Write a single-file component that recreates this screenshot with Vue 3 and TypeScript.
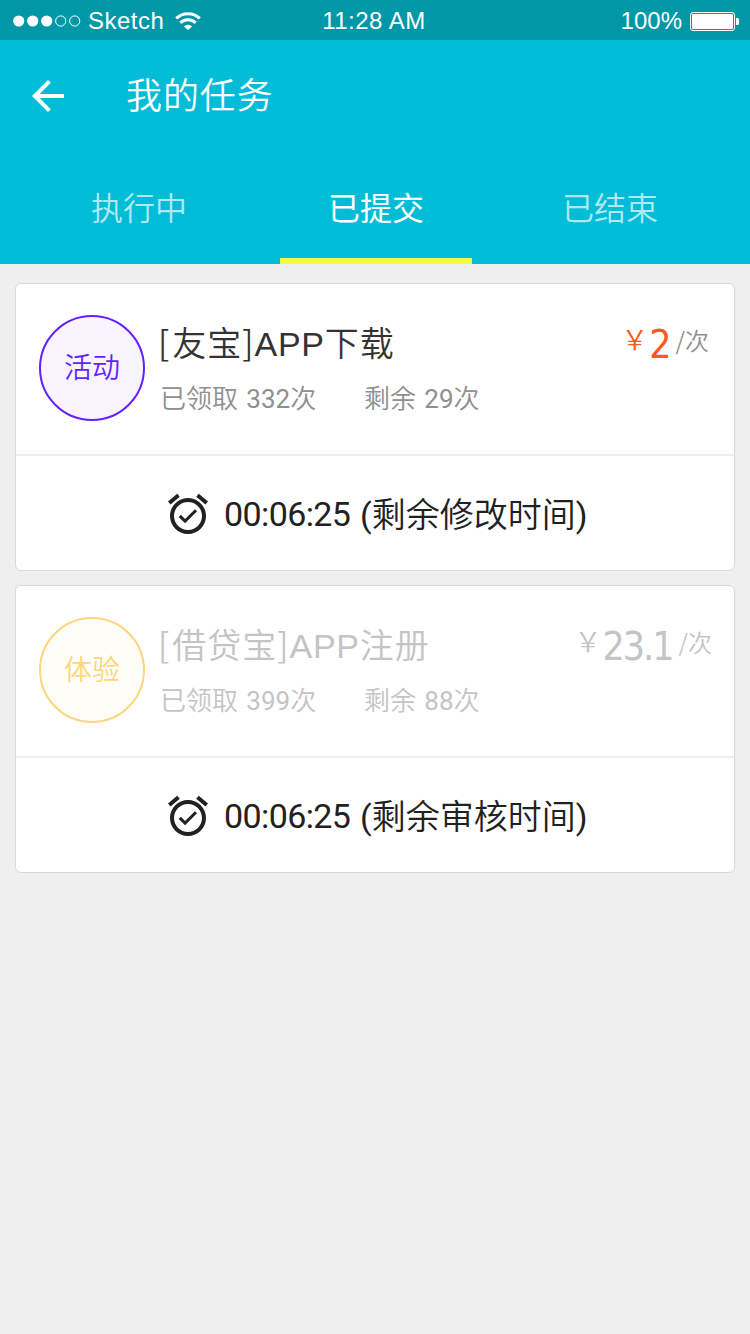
<script setup lang="ts">
import { ref } from 'vue'

interface Task {
  id: number
  tag: string
  tone: 'activity' | 'trial'
  muted: boolean
  bracket: string
  name: string
  suffix: string
  taken: number
  left: number
  price: string
  countdown: string
  note: string
}

const tabs: string[] = ['执行中', '已提交', '已结束']
const current = ref<number>(1)

const tasks: Task[] = [
  {
    id: 1, tag: '活动', tone: 'activity', muted: false, bracket: '友宝', name: 'APP', suffix: '下载',
    taken: 332, left: 29, price: '2', countdown: '00:06:25', note: '剩余修改时间',
  },
  {
    id: 2, tag: '体验', tone: 'trial', muted: true, bracket: '借贷宝', name: 'APP', suffix: '注册',
    taken: 399, left: 88, price: '23.1', countdown: '00:06:25', note: '剩余审核时间',
  },
]
</script>

<template>
  <div class="screen">
    <div class="status">
      <div class="status-left">
        <svg class="signal" width="70" height="12" viewBox="0 0 70 12">
          <circle v-for="n in 3" :key="n" :cx="n * 14 - 8.3" cy="6" r="5.6" fill="#fff" />
          <circle v-for="n in 2" :key="'o' + n" :cx="n * 14 + 33.7" cy="6" r="5.1" fill="none" stroke="#fff" stroke-width="1" />
        </svg>
        <span class="carrier">Sketch</span>
        <svg class="wifi" width="26" height="18" viewBox="0 0 26 18">
          <g fill="none" stroke="#fff" stroke-width="3">
            <path d="M1.2 6.4a17 17 0 0 1 23.6 0" />
            <path d="M5.3 10.9a11.2 11.2 0 0 1 15.4 0" />
          </g>
          <path d="M8.9 14.4a6 6 0 0 1 8.2 0L13 18z" fill="#fff" />
        </svg>
      </div>
      <span class="clock">11:28 AM</span>
      <div class="status-right">
        <span class="percent">100%</span>
        <svg class="battery" width="50" height="20" viewBox="0 0 50 20">
          <rect x=".5" y=".5" width="44" height="18" rx="2.5" fill="none" stroke="#fff" />
          <rect x="2" y="2" width="41" height="15" rx="1" fill="#fff" />
          <path d="M46 6h1.5q1.5 0 1.5 1.5v4q0 1.5-1.5 1.5H46z" fill="#fff" />
        </svg>
      </div>
    </div>

    <header class="header">
      <div class="bar">
        <svg class="back" width="48" height="48" viewBox="0 0 24 24">
          <path fill="#fff" d="M20 11H7.83l5.59-5.59L12 4l-8 8 8 8 1.41-1.41L7.83 13H20v-2z" />
        </svg>
        <h1 class="title">我的任务</h1>
      </div>
      <nav class="tabs">
        <button v-for="(tab, i) in tabs" :key="tab" class="tab" :class="{ active: i === current }" @click="current = i">
          {{ tab }}
        </button>
      </nav>
    </header>

    <main class="list">
      <article v-for="task in tasks" :key="task.id" class="card">
        <div class="info" :class="{ muted: task.muted }">
          <div class="tag" :class="task.tone">{{ task.tag }}</div>
          <div class="body">
            <h2 class="name"><span class="open">[</span>{{ task.bracket }}<span class="close">]</span><span class="latin">{{ task.name }}</span>{{ task.suffix }}</h2>
            <div class="counts">
              <span class="taken">已领取 <span class="num">{{ task.taken }}</span>次</span>
              <span>剩余 <span class="num">{{ task.left }}</span>次</span>
            </div>
          </div>
          <div class="price">
            <span class="yen">￥</span>
            <span class="amount">{{ task.price }}</span>
            <span class="unit"><span class="slash">/</span>次</span>
          </div>
        </div>
        <div class="timer">
          <svg width="48" height="48" viewBox="0 0 24 24">
            <path
              fill="#212121"
              d="M22 5.72l-4.6-3.86-1.29 1.53 4.6 3.86L22 5.72zM7.88 3.39L6.6 1.86 2 5.71l1.29 1.53 4.59-3.85zM12 4c-4.97 0-9 4.03-9 9s4.02 9 9 9c4.97 0 9-4.03 9-9s-4.03-9-9-9zm0 16c-3.87 0-7-3.13-7-7s3.13-7 7-7 7 3.13 7 7-3.13 7-7 7zm-1.46-5.47L8.41 12.4l-1.06 1.06 3.18 3.18 6-6-1.06-1.06-4.93 4.95z"
            />
          </svg>
          <span class="countdown">{{ task.countdown }}</span>
          <span class="note"><span class="num">(</span>{{ task.note }}<span class="num">)</span></span>
        </div>
      </article>
    </main>
  </div>
</template>

<style>
body {
  background: #efefef;
}
</style>

<style scoped>
.screen {
  width: 750px;
  height: 1334px;
  overflow: hidden;
  background: #efefef;
  font-family: Roboto, "Noto Sans CJK SC", sans-serif;
  font-weight: 350;
  white-space: nowrap;
}

.status {
  display: grid;
  grid-template-columns: 1fr auto 1fr;
  align-items: center;
  height: 40px;
  background: #0097a7;
  color: #fff;
  font: 400 24px/40px "Liberation Sans", sans-serif;
}

.status-left,
.status-right {
  display: flex;
  align-items: center;
}

.status-left {
  padding-left: 13px;
}

.signal {
  margin-top: 1px;
}

.carrier {
  margin-left: 5px;
  width: 87px;
  padding-top: 1px;
  letter-spacing: 0.5px;
}

.clock {
  padding-top: 1px;
  letter-spacing: 0.5px;
  margin-right: 2px;
}

.status-right {
  justify-content: flex-end;
  padding-right: 10px;
}

.percent {
  margin-right: 8px;
  padding-top: 1px;
}

.battery {
  margin-top: 2px;
}

.header {
  height: 224px;
  background: #00bcd7;
  color: #fff;
}

.bar {
  display: flex;
  align-items: center;
  height: 112px;
  padding-left: 24px;
}

.title {
  margin: 0 0 0 54px;
  padding-top: 2px;
  font-size: 36px;
  font-weight: 350;
  line-height: 48px;
  letter-spacing: 0.9px;
}

.tabs {
  display: grid;
  grid-template-columns: 237px 234px 192px;
  height: 112px;
  padding-left: 43px;
}

.tab {
  width: 192px;
  border: 0;
  border-bottom: 6px solid transparent;
  padding: 8px 0 0;
  background: none;
  color: rgba(255, 255, 255, 0.7);
  font: inherit;
  font-size: 32px;
  line-height: 98px;
}

.tab.active {
  border-bottom-color: #eeff41;
  color: #fff;
  font-weight: 400;
}

.list {
  display: flex;
  flex-direction: column;
  gap: 14px;
  padding: 19px 15px 0;
}

.card {
  box-sizing: border-box;
  height: 288px;
  border: 1px solid #d8d8d8;
  border-radius: 6px;
  background: #fff;
}

.info {
  display: flex;
  box-sizing: border-box;
  height: 172px;
  padding: 31px 25px 0 23px;
  border-bottom: 2px solid #eee;
  color: #333;
}

.tag {
  box-sizing: border-box;
  width: 106px;
  height: 106px;
  border: 2px solid;
  border-radius: 50%;
  font-size: 28px;
  line-height: 103px;
  text-align: center;
}

.activity {
  color: #651fff;
  background: #f7f3ff;
}

.trial {
  color: #ffd57c;
  background: #fffdf8;
}

.body {
  margin-left: 13px;
  flex: 1;
}

.name {
  margin: 5px 0 0;
  font-size: 34px;
  font-weight: 350;
  line-height: 44px;
  letter-spacing: 1px;
}

.open,
.close,
.slash {
  font-family: "Noto Sans CJK SC", sans-serif;
}

.open {
  margin-right: 2px;
}

.latin {
  font-family: "Liberation Sans", sans-serif;
  font-weight: 400;
  letter-spacing: 0.7px;
}

.counts {
  display: flex;
  margin: 15px 0 0 2px;
  color: #8f8f8f;
  font-size: 26px;
  line-height: 36px;
  word-spacing: 2px;
}

.num {
  font-weight: 400;
}

.taken {
  width: 204px;
}

.price {
  display: flex;
  align-items: baseline;
  height: 50px;
  padding-top: 5px;
  line-height: 50px;
}

.yen {
  margin-right: 1px;
  margin-left: -1px;
  color: #ff5722;
  font-family: "Noto Sans CJK SC", sans-serif;
  font-size: 27px;
  position: relative;
  top: -8px;
}

.amount {
  color: #ff5722;
  font-family: "Roboto Slab", "DejaVu Sans Condensed", "DejaVu Sans", sans-serif;
  font-size: 39px;
  font-weight: 400;
  font-stretch: condensed;
  letter-spacing: -2px;
}

.unit {
  margin-left: 6px;
  color: #8f8f8f;
  font-size: 24px;
  position: relative;
  top: -8px;
}

.muted {
  padding-right: 22px;
}

.muted,
.muted .counts,
.muted .yen,
.muted .amount,
.muted .unit {
  color: #c4c4c4;
}

.timer {
  display: flex;
  align-items: center;
  height: 116px;
  padding-left: 148px;
  color: #212121;
  font-size: 34px;
  line-height: 48px;
}

.countdown {
  width: 136px;
  margin-left: 12px;
  font-weight: 400;
  letter-spacing: -0.6px;
}

.note {
  padding-top: 1px;
}
</style>
